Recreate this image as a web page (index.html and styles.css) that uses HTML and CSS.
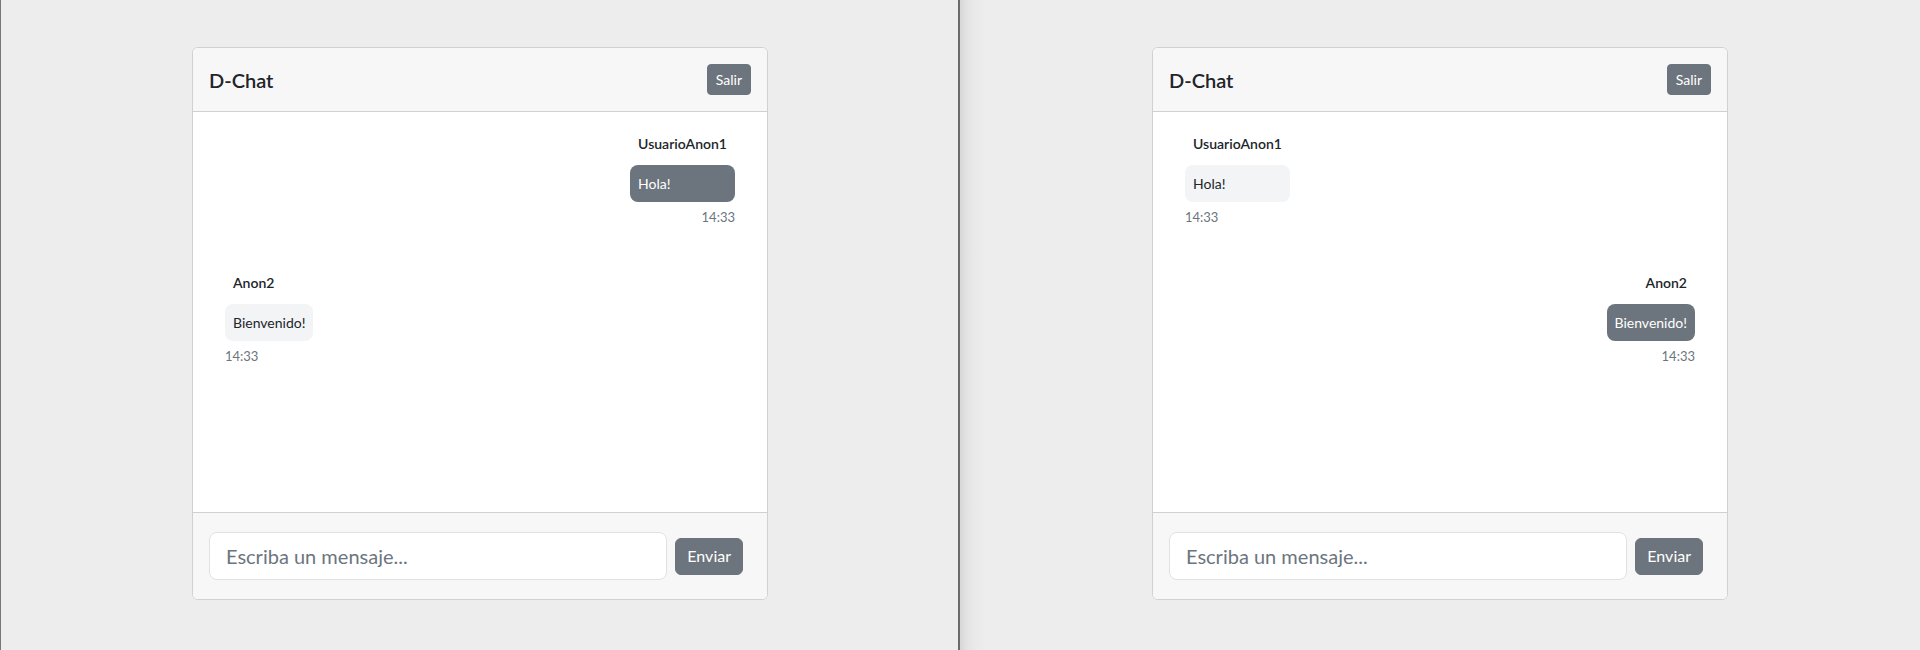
FILE: index.html
```html
<!DOCTYPE html>
<html lang="es">
<head>
<meta charset="utf-8">
<title>D-Chat</title>
<link rel="stylesheet" href="styles.css">
</head>
<body>
<div class="screen">
  <section class="pane pane-left">
    <div class="card">
      <div class="card-header">
        <h5 class="title">D-Chat</h5>
        <button class="btn btn-sm">Salir</button>
      </div>
      <div class="chat">
        <div class="row sent">
          <div class="msg">
            <div class="name">UsuarioAnon1</div>
            <div class="bubble">Hola!</div>
            <div class="time">14:33</div>
          </div>
        </div>
        <div class="row recv">
          <div class="msg">
            <div class="name">Anon2</div>
            <div class="bubble">Bienvenido!</div>
            <div class="time">14:33</div>
          </div>
        </div>
      </div>
      <div class="card-footer">
        <input class="input" type="text" placeholder="Escriba un mensaje...">
        <button class="btn btn-send">Enviar</button>
      </div>
    </div>
  </section>
  <section class="pane pane-right">
    <div class="card">
      <div class="card-header">
        <h5 class="title">D-Chat</h5>
        <button class="btn btn-sm">Salir</button>
      </div>
      <div class="chat">
        <div class="row recv">
          <div class="msg">
            <div class="name">UsuarioAnon1</div>
            <div class="bubble">Hola!</div>
            <div class="time">14:33</div>
          </div>
        </div>
        <div class="row sent">
          <div class="msg">
            <div class="name">Anon2</div>
            <div class="bubble">Bienvenido!</div>
            <div class="time">14:33</div>
          </div>
        </div>
      </div>
      <div class="card-footer">
        <input class="input" type="text" placeholder="Escriba un mensaje...">
        <button class="btn btn-send">Enviar</button>
      </div>
    </div>
  </section>
</div>
</body>
</html>
```

FILE: styles.css
```css
* { box-sizing: border-box; }

html, body {
  margin: 0;
  padding: 0;
  height: 650px;
  overflow: hidden;
}

body {
  font-family: Lato, "Noto Sans", sans-serif;
  color: #212529;
  background: #ededed;
}

.screen {
  display: grid;
  grid-template-columns: 960px 960px;
  height: 650px;
}

.pane {
  height: 650px;
  padding-top: 47px;
}

.pane-left {
  background: #ededed;
  box-shadow: inset 1px 0 0 #777777, inset -2px 0 0 #6b6b6b;
}

.pane-right {
  background: linear-gradient(90deg, #d6d6d6 0, #e2e2e2 6px, #e9e9e9 14px, #ededed 26px);
}

.card {
  width: 576px;
  margin: 0 auto;
  background: #ffffff;
  border: 1px solid #d1d1d1;
  border-radius: 6px;
  overflow: hidden;
}

.card-header {
  display: flex;
  align-items: center;
  justify-content: space-between;
  padding: 16px;
  background: #f7f7f7;
  border-bottom: 1px solid #d1d1d1;
}

.title {
  margin: 0;
  font-size: 20px;
  line-height: 24px;
  font-weight: 600;
  color: #212529;
}

.btn {
  font-family: inherit;
  color: #ffffff;
  background: #6c757d;
  border: 1px solid #6c757d;
  cursor: pointer;
}

.btn-sm {
  font-size: 14px;
  line-height: 21px;
  padding: 4px 8px;
  border-radius: 4px;
}

.chat {
  height: 400px;
  padding: 16px 32px;
  background: #ffffff;
}

.row {
  display: flex;
  margin-bottom: 40px;
}

.row.sent { justify-content: flex-end; }
.row.recv { justify-content: flex-start; }

.msg {
  display: flex;
  flex-direction: column;
  align-items: stretch;
}

.name {
  font-size: 14px;
  line-height: 21px;
  font-weight: 600;
  padding: 5px 8px 3px;
  margin-bottom: 8px;
  color: #212529;
}

.bubble {
  font-size: 14px;
  line-height: 21px;
  padding: 8px;
  border-radius: 8px;
  text-align: left;
}

.sent .bubble {
  background: #6c757d;
  color: #ffffff;
}

.recv .bubble {
  background: #f3f4f6;
  color: #212529;
}

.time {
  margin-top: 5.5px;
  font-size: 13px;
  line-height: 19.5px;
  color: #6c757d;
}

.sent .name, .sent .time { text-align: right; }
.recv .name, .recv .time { text-align: left; }

.card-footer {
  display: flex;
  align-items: center;
  gap: 8px;
  padding: 19px 24px 19px 16px;
  background: #f7f7f7;
  border-top: 1px solid #d1d1d1;
}

.input {
  flex: 1;
  min-width: 0;
  height: 48px;
  padding: 8px 16px;
  font-family: inherit;
  font-size: 20px;
  line-height: 30px;
  color: #212529;
  background: #ffffff;
  border: 1px solid #dee2e6;
  border-radius: 8px;
  outline: none;
}

.input::placeholder {
  color: #6c757d;
  opacity: 1;
}

.btn-send {
  font-size: 16px;
  line-height: 24px;
  height: 37px;
  padding: 5px 11px;
  border-radius: 6px;
}
```
